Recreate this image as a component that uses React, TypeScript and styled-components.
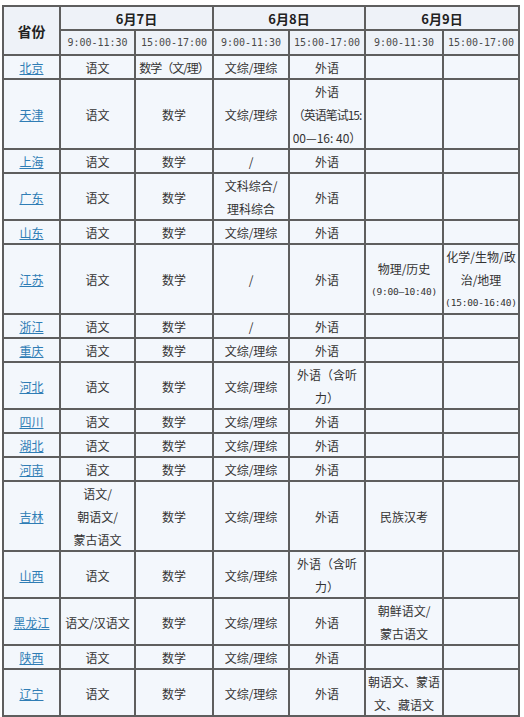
import React from "react";
import styled, { createGlobalStyle } from "styled-components";

const Global = createGlobalStyle`
  html, body { margin: 0; padding: 0; background: #ffffff; }
  body { font-family: "Noto Sans CJK SC", "Noto Sans", sans-serif; }
`;

const Table = styled.table`
  margin: 5px 0 0 2px;
  border-collapse: collapse;
  table-layout: fixed;
  width: 518px;
  border: 2px solid #5e5e5e;
`;

const HeadCell = styled.th<{ $h: number; $size: number; $mono?: boolean }>`
  border: 2px solid #5e5e5e;
  background: #eef2f8;
  height: ${(p) => p.$h}px;
  padding: 0;
  text-align: center;
  vertical-align: middle;
  font-size: ${(p) => p.$size}px;
  font-weight: ${(p) => (p.$mono ? 400 : 700)};
  font-family: ${(p) =>
    p.$mono ? '"DejaVu Sans Mono", "Liberation Mono", monospace' : '"Noto Sans CJK SC", sans-serif'};
  color: ${(p) => (p.$mono ? "#4a4a4a" : "#222")};
  white-space: nowrap;
  line-height: 1;
`;

const Cell = styled.td`
  border: 2px solid #5e5e5e;
  background: #f3f7fc;
  padding: 0;
  text-align: center;
  vertical-align: middle;
  font-size: 12px;
  color: #333;
  white-space: nowrap;
  overflow: hidden;
`;

const Lines = styled.div`
  line-height: 23px;
  margin-bottom: -1px;
`;

type Kind = "text" | "mono" | "tight";

const Line = styled.div<{ $kind: Kind }>`
  font-family: ${(p) =>
    p.$kind === "mono"
      ? '"DejaVu Sans Mono", "Liberation Mono", monospace'
      : '"Noto Sans CJK SC", sans-serif'};
  font-size: ${(p) => (p.$kind === "mono" ? "9.5px" : "12px")};
  letter-spacing: ${(p) =>
    p.$kind === "tight" ? "-1px" : p.$kind === "mono" ? "-0.2px" : "0"};
`;

const Province = styled.a`
  color: #2f7db5;
  text-decoration: underline;
  font-size: 12px;
`;

type Row = { p: string; c: string[][] };

const M = "§"; // monospace line
const T = "~"; // tightly spaced line

const rows: Row[] = [
  { p: "北京", c: [["语文"], [T + "数学（文/理）"], ["文综/理综"], ["外语"], [], []] },
  {
    p: "天津",
    c: [["语文"], ["数学"], ["文综/理综"], ["外语", T + "（英语笔试15:", "00—16: 40）"], [], []],
  },
  { p: "上海", c: [["语文"], ["数学"], ["/"], ["外语"], [], []] },
  { p: "广东", c: [["语文"], ["数学"], ["文科综合/", "理科综合"], ["外语"], [], []] },
  { p: "山东", c: [["语文"], ["数学"], ["文综/理综"], ["外语"], [], []] },
  {
    p: "江苏",
    c: [
      ["语文"],
      ["数学"],
      ["/"],
      ["外语"],
      ["物理/历史", M + "(9:00—10:40)"],
      ["化学/生物/政", "治/地理", M + "(15:00-16:40)"],
    ],
  },
  { p: "浙江", c: [["语文"], ["数学"], ["/"], ["外语"], [], []] },
  { p: "重庆", c: [["语文"], ["数学"], ["文综/理综"], ["外语"], [], []] },
  { p: "河北", c: [["语文"], ["数学"], ["文综/理综"], ["外语（含听", "力）"], [], []] },
  { p: "四川", c: [["语文"], ["数学"], ["文综/理综"], ["外语"], [], []] },
  { p: "湖北", c: [["语文"], ["数学"], ["文综/理综"], ["外语"], [], []] },
  { p: "河南", c: [["语文"], ["数学"], ["文综/理综"], ["外语"], [], []] },
  {
    p: "吉林",
    c: [["语文/", "朝语文/", "蒙古语文"], ["数学"], ["文综/理综"], ["外语"], ["民族汉考"], []],
  },
  { p: "山西", c: [["语文"], ["数学"], ["文综/理综"], ["外语（含听", "力）"], [], []] },
  {
    p: "黑龙江",
    c: [["语文/汉语文"], ["数学"], ["文综/理综"], ["外语"], ["朝鲜语文/", "蒙古语文"], []],
  },
  { p: "陕西", c: [["语文"], ["数学"], ["文综/理综"], ["外语"], [], []] },
  {
    p: "辽宁",
    c: [["语文"], ["数学"], ["文综/理综"], ["外语"], ["朝语文、蒙语", "文、藏语文"], []],
  },
];

const widths = [57, 75, 78, 76, 76, 78, 76];

function kindOf(l: string): [Kind, string] {
  if (l.startsWith(M)) return ["mono", l.slice(1)];
  if (l.startsWith(T)) return ["tight", l.slice(1)];
  return ["text", l];
}

function CellLines({ lines }: { lines: string[] }) {
  if (lines.length === 0) return <Lines>&nbsp;</Lines>;
  return (
    <Lines>
      {lines.map((l, i) => {
        const [k, s] = kindOf(l);
        return (
          <Line key={i} $kind={k}>
            {s}
          </Line>
        );
      })}
    </Lines>
  );
}

export default function App() {
  const dates = ["6月7日", "6月8日", "6月9日"];
  return (
    <>
      <Global />
      <Table>
        <colgroup>
          {widths.map((w, i) => (
            <col key={i} style={{ width: w }} />
          ))}
        </colgroup>
        <thead>
          <tr>
            <HeadCell rowSpan={2} $h={22} $size={14}>
              省份
            </HeadCell>
            {dates.map((d) => (
              <HeadCell key={d} colSpan={2} $h={22} $size={13}>
                {d}
              </HeadCell>
            ))}
          </tr>
          <tr>
            {dates.flatMap((d) => [
              <HeadCell key={d + "a"} $h={23} $size={10} $mono>
                9:00-11:30
              </HeadCell>,
              <HeadCell key={d + "b"} $h={23} $size={10} $mono>
                15:00-17:00
              </HeadCell>,
            ])}
          </tr>
        </thead>
        <tbody>
          {rows.map((r) => (
            <tr key={r.p}>
              <Cell>
                <Lines>
                  <Province href="#">{r.p}</Province>
                </Lines>
              </Cell>
              {r.c.map((lines, i) => (
                <Cell key={i}>
                  <CellLines lines={lines} />
                </Cell>
              ))}
            </tr>
          ))}
        </tbody>
      </Table>
    </>
  );
}
